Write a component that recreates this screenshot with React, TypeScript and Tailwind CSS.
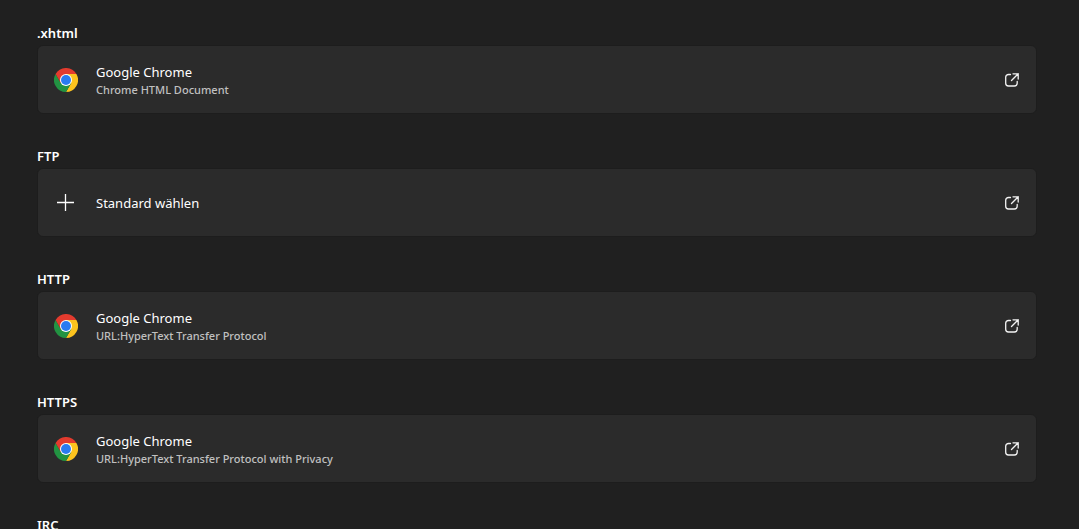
type Association = {
  name: string;
  app?: string;
  description?: string;
};

const ASSOCIATIONS: Association[] = [
  { name: ".xhtml", app: "Google Chrome", description: "Chrome HTML Document" },
  { name: "FTP" },
  {
    name: "HTTP",
    app: "Google Chrome",
    description: "URL:HyperText Transfer Protocol",
  },
  {
    name: "HTTPS",
    app: "Google Chrome",
    description: "URL:HyperText Transfer Protocol with Privacy",
  },
];

function ChromeIcon() {
  return (
    <svg viewBox="0 0 48 48" className="size-6" aria-hidden="true">
      <path d="M24 24 3.2 12A24 24 0 0 1 44.8 12Z" fill="#e33b2e" />
      <path d="M24 12H44.8A24 24 0 0 1 24 48L34.4 30Z" fill="#fcc31e" />
      <path d="M13.6 30 3.2 12A24 24 0 0 0 24 48L34.4 30Z" fill="#229342" />
      <path d="M3.2 12 13.6 30 24 12Z" fill="#e33b2e" />
      <circle cx="24" cy="24" r="12" fill="#fff" />
      <circle cx="24" cy="24" r="10" fill="#2a7bf0" />
    </svg>
  );
}

function PlusIcon() {
  return (
    <svg viewBox="0 0 24 24" className="size-6" aria-hidden="true">
      <path
        d="M11.5 3v17M3 11.5h17"
        fill="none"
        stroke="#fff"
        strokeWidth="1.3"
      />
    </svg>
  );
}

function OpenIcon() {
  return (
    <svg
      viewBox="0 0 16 16"
      className="size-4 shrink-0"
      fill="none"
      stroke="#f3f3f3"
      strokeWidth="1.3"
      strokeLinecap="round"
      strokeLinejoin="round"
      aria-hidden="true"
    >
      <path d="M6.5 2.5H4.5a2.8 2.8 0 0 0-2.8 2.8v5.9a2.8 2.8 0 0 0 2.8 2.8h5.9a2.8 2.8 0 0 0 2.8-2.8V9.5" />
      <path d="M9 1.8h5.2V7M14.2 1.8 7.5 8.5" />
    </svg>
  );
}

function AssociationRow({ item }: { item: Association }) {
  return (
    <section>
      <h2 className="text-[13px] leading-5 font-semibold">{item.name}</h2>
      <button
        type="button"
        className="mt-0.5 flex h-[69px] w-full items-center rounded-md border border-[#1d1d1d] bg-[#2b2b2b] px-4 text-left hover:bg-[#323232]"
      >
        {item.app ? <ChromeIcon /> : <PlusIcon />}
        <span className="ml-[18px] flex-1">
          <span className="block text-[13px] leading-5">
            {item.app ?? "Standard wählen"}
          </span>
          {item.description ? (
            <span className="block text-[11px] leading-4 font-medium text-[#c0c0c0]">
              {item.description}
            </span>
          ) : null}
        </span>
        <OpenIcon />
      </button>
    </section>
  );
}

export default function App() {
  return (
    <main className="flex h-screen flex-col gap-8 overflow-hidden bg-[#202020] pt-[23px] pr-[42px] pl-[37px] font-['Noto_Sans',sans-serif] text-white">
      {ASSOCIATIONS.map((item) => (
        <AssociationRow key={item.name} item={item} />
      ))}
      <h2 className="text-[13px] leading-5 font-semibold">IRC</h2>
    </main>
  );
}
